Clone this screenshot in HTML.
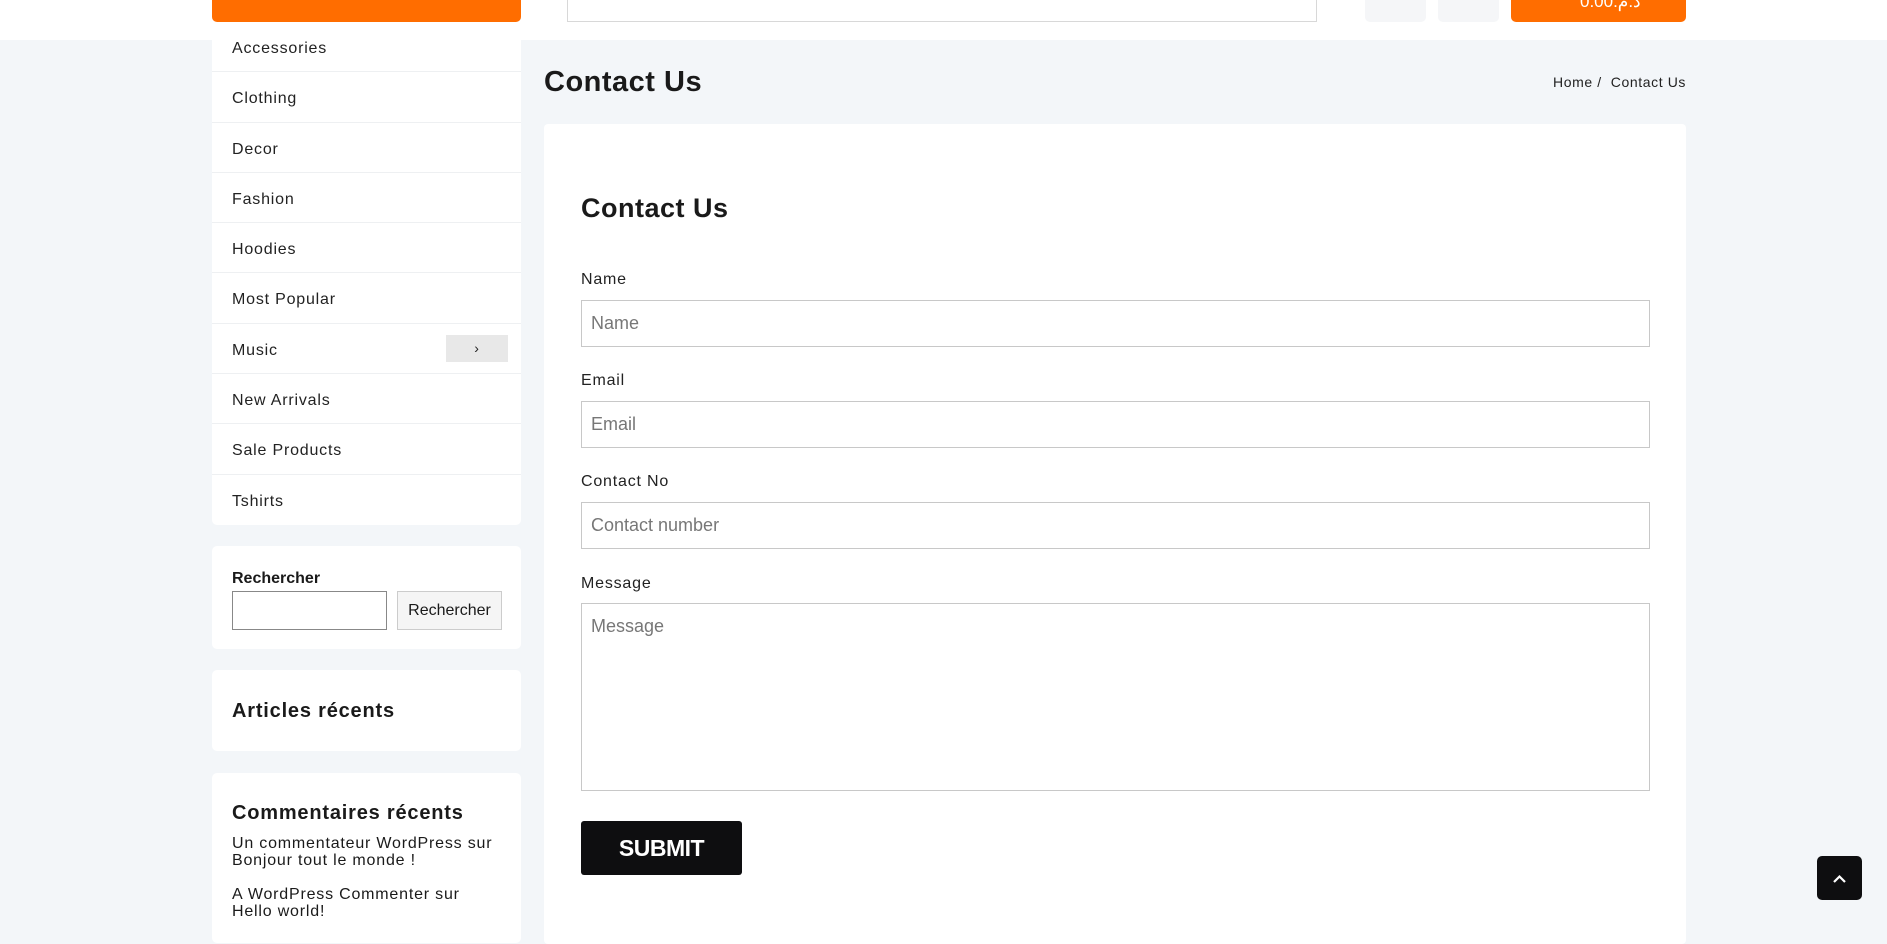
<!DOCTYPE html>
<html><head><meta charset="utf-8"><style>
*{box-sizing:border-box;margin:0;padding:0}
body{width:1887px;height:931px;overflow:hidden;background:#f3f6f9;font-family:"Liberation Sans",sans-serif;color:#1a1a1a;position:relative}
.abs{position:absolute}
.hdr{left:0;top:0;width:1887px;height:40px;background:#fff}
.box{background:#fff;border-radius:5px}
.cat{left:212px;top:22px;width:309px;height:503px;border-radius:0 0 5px 5px}
.cat div{height:50.3px;line-height:54px;padding-left:20px;font-size:16px;letter-spacing:.8px;border-bottom:1px solid #eef0f2;position:relative;color:#222}
.cat div:last-child{border-bottom:none}
.lbl{font-size:16px;letter-spacing:.8px;color:#222}
.inp{border:1px solid #c8c8c8;background:#fff;font-size:18px;color:#777;padding-left:9px}
</style></head><body>
<div class="abs hdr"></div>
<div class="abs" style="left:212px;top:0;width:309px;height:22px;background:#ff6d00;border-radius:0 0 5px 5px"></div>
<div class="abs" style="left:567px;top:-2px;width:750px;height:24px;border:1px solid #d8d8d8;border-top:none"></div>
<div class="abs" style="left:1365px;top:0;width:61px;height:22px;background:#f5f6f8;border-radius:0 0 5px 5px"></div>
<div class="abs" style="left:1438px;top:0;width:61px;height:22px;background:#f5f6f8;border-radius:0 0 5px 5px"></div>
<div class="abs" style="left:1511px;top:0;width:175px;height:22px;background:#ff6d00;border-radius:0 0 5px 5px;color:#fff;font-size:17px;padding-left:69px;line-height:4px;letter-spacing:1px"><bdo dir="ltr">0.00.م.د</bdo></div>

<div class="abs box cat">
<div>Accessories</div><div>Clothing</div><div>Decor</div><div>Fashion</div><div>Hoodies</div><div>Most Popular</div>
<div>Music<span class="abs" style="left:234px;top:11px;width:62px;height:27px;background:#e8e8e8;line-height:27px;text-align:center;font-size:14px">›</span></div>
<div>New Arrivals</div><div>Sale Products</div><div>Tshirts</div>
</div>

<div class="abs box" style="left:212px;top:546px;width:309px;height:103px"></div>
<div class="abs" style="left:232px;top:570px;font-size:16px;font-weight:bold">Rechercher</div>
<div class="abs" style="left:232px;top:591px;width:155px;height:39px;border:1px solid #888;background:#fff"></div>
<div class="abs" style="left:397px;top:591px;width:105px;height:39px;border:1px solid #ccc;background:#f5f5f5;font-size:16px;line-height:37px;text-align:center">Rechercher</div>

<div class="abs box" style="left:212px;top:670px;width:309px;height:81px"></div>
<div class="abs" style="left:232px;top:700px;font-size:20px;font-weight:bold;letter-spacing:.8px">Articles récents</div>

<div class="abs box" style="left:212px;top:773px;width:309px;height:170px"></div>
<div class="abs" style="left:232px;top:802px;font-size:20px;font-weight:bold;letter-spacing:.8px">Commentaires récents</div>
<div class="abs" style="left:232px;top:835px;font-size:16px;letter-spacing:.8px;line-height:17px">Un commentateur WordPress sur<br>Bonjour tout le monde !</div>
<div class="abs" style="left:232px;top:886px;font-size:16px;letter-spacing:.8px;line-height:17px">A WordPress Commenter sur<br>Hello world!</div>

<div class="abs" style="left:544px;top:66px;font-size:29px;font-weight:bold;letter-spacing:.5px">Contact Us</div>
<div class="abs" style="left:1486px;top:74px;width:200px;text-align:right;font-size:14px;letter-spacing:.6px;color:#222">Home /&nbsp;&nbsp;Contact Us</div>

<div class="abs" style="left:544px;top:124px;width:1142px;height:820px;background:#fff;border-radius:4px"></div>
<div class="abs" style="left:581px;top:193px;font-size:27px;font-weight:bold;letter-spacing:.5px">Contact Us</div>

<div class="abs lbl" style="left:581px;top:271px">Name</div>
<div class="abs inp" style="left:581px;top:300px;width:1069px;height:47px;line-height:45px">Name</div>
<div class="abs lbl" style="left:581px;top:372px">Email</div>
<div class="abs inp" style="left:581px;top:401px;width:1069px;height:47px;line-height:45px">Email</div>
<div class="abs lbl" style="left:581px;top:473px">Contact No</div>
<div class="abs inp" style="left:581px;top:502px;width:1069px;height:47px;line-height:45px">Contact number</div>
<div class="abs lbl" style="left:581px;top:575px">Message</div>
<div class="abs inp" style="left:581px;top:603px;width:1069px;height:188px;padding-top:12px">Message</div>

<div class="abs" style="left:581px;top:821px;width:161px;height:54px;background:#0e0e10;border-radius:3px;color:#fff;font-size:23px;font-weight:bold;text-align:center;line-height:54px;letter-spacing:-.5px">SUBMIT</div>

<div class="abs" style="left:1817px;top:856px;width:45px;height:44px;background:#0e0e10;border-radius:5px"><svg width="45" height="44"><path d="M17 26 L22.5 20.5 L28 26" stroke="#fff" stroke-width="2.2" fill="none"/></svg></div>
</body></html>
